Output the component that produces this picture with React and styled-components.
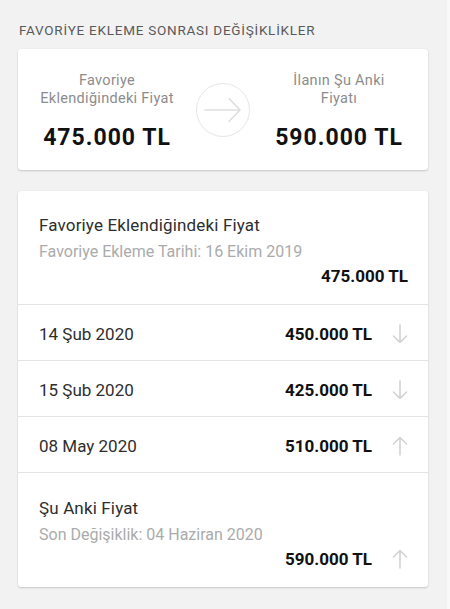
import React from "react";
import styled, { createGlobalStyle } from "styled-components";

const Global = createGlobalStyle`
  html, body { margin: 0; padding: 0; background: #f9f9f9; }
  body { font-family: Roboto, "Noto Sans", Arial, sans-serif; -webkit-font-smoothing: antialiased; }
`;

const Page = styled.div`
  width: 447px;
  min-height: 609px;
  box-sizing: border-box;
  background: #f2f2f2;
  padding: 22px 19px 20px 18px;
`;

const Heading = styled.div`
  font-size: 13.5px;
  line-height: 16px;
  letter-spacing: 0.75px;
  color: #5a5a5a;
  text-transform: uppercase;
  padding-left: 1px;
  margin-bottom: 11px;
  white-space: nowrap;
`;

const Card = styled.div`
  background: #fff;
  border-radius: 3px;
  box-shadow: 0 1px 2px rgba(0, 0, 0, 0.18), 0 0 1px rgba(0, 0, 0, 0.08);
  margin-bottom: ${(p) => p.$mb || 0}px;
  overflow: hidden;
`;

const Summary = styled.div`
  display: grid;
  grid-template-columns: 1fr auto 1fr;
  column-gap: 16px;
  align-items: center;
  padding: 0 16px;
  height: 121px;
  box-sizing: border-box;
`;

const SummaryCol = styled.div`
  text-align: center;
  padding-top: 3px;
`;

const SummaryLabel = styled.div`
  font-size: 14.5px;
  line-height: 18px;
  letter-spacing: 0.3px;
  color: #8c8c8c;
`;

const SummaryPrice = styled.div`
  font-size: 23px;
  line-height: 26px;
  letter-spacing: 1px;
  font-weight: 700;
  color: #111;
  margin-top: 17px;
  white-space: nowrap;
`;

const Circle = styled.div`
  width: 52px;
  height: 52px;
  border-radius: 50%;
  border: 1.5px solid #e6e6e6;
  display: flex;
  align-items: center;
  justify-content: center;
`;

const Section = styled.div`
  padding: ${(p) => (p.$last ? "25px" : "24px")} 20px 18px 21px;
  height: ${(p) => p.$h}px;
  box-sizing: border-box;
  border-top: ${(p) => (p.$first ? "none" : "1px solid #e4e4e4")};
`;

const Title = styled.div`
  font-size: 17px;
  line-height: 20px;
  letter-spacing: 0.15px;
  color: #2e2e2e;
`;

const Sub = styled.div`
  font-size: 16px;
  line-height: 20px;
  color: #ababab;
  margin-top: 7px;
`;

const PriceLine = styled.div`
  display: flex;
  justify-content: flex-end;
  align-items: center;
  margin-top: 4px;
`;

const Row = styled.div`
  display: flex;
  align-items: center;
  height: 56px;
  box-sizing: border-box;
  padding: 2px 20px 0 21px;
  border-top: 1px solid #e4e4e4;
`;

const RowDate = styled.div`
  flex: 1;
  font-size: 17px;
  line-height: 20px;
  color: #2e2e2e;
`;

const Price = styled.div`
  font-size: 17px;
  line-height: 20px;
  font-weight: 700;
  color: #111;
  white-space: nowrap;
`;

const ArrowBox = styled.div`
  width: 16px;
  margin-left: 20px;
  display: flex;
  justify-content: center;
`;

const ArrowRight = () => (
  <svg width="38" height="28" viewBox="0 0 38 28" fill="none">
    <path d="M1 14H36M25 2.5L36 14L25 25.5" stroke="#dedede" strokeWidth="1.6" strokeLinecap="round" strokeLinejoin="round" />
  </svg>
);

const Vert = ({ up }) => (
  <svg width="16" height="20" viewBox="0 0 16 20" fill="none">
    {up ? (
      <path d="M8 19V1.5M1.5 8L8 1.5L14.5 8" stroke="#d3d3d3" strokeWidth="1.6" strokeLinecap="round" strokeLinejoin="round" />
    ) : (
      <path d="M8 1V18.5M1.5 12L8 18.5L14.5 12" stroke="#d3d3d3" strokeWidth="1.6" strokeLinecap="round" strokeLinejoin="round" />
    )}
  </svg>
);

const changes = [
  { date: "14 Şub 2020", price: "450.000 TL", up: false },
  { date: "15 Şub 2020", price: "425.000 TL", up: false },
  { date: "08 May 2020", price: "510.000 TL", up: true },
];

export default function App() {
  return (
    <>
      <Global />
      <Page>
        <Heading>Favorİye Ekleme Sonrası Değİşİklİkler</Heading>
        <Card $mb={21}>
          <Summary>
            <SummaryCol>
              <SummaryLabel>Favoriye<br />Eklendiğindeki Fiyat</SummaryLabel>
              <SummaryPrice>475.000 TL</SummaryPrice>
            </SummaryCol>
            <Circle>
              <ArrowRight />
            </Circle>
            <SummaryCol>
              <SummaryLabel>İlanın Şu Anki<br />Fiyatı</SummaryLabel>
              <SummaryPrice>590.000 TL</SummaryPrice>
            </SummaryCol>
          </Summary>
        </Card>
        <Card>
          <Section $first $h={113}>
            <Title>Favoriye Eklendiğindeki Fiyat</Title>
            <Sub>Favoriye Ekleme Tarihi: 16 Ekim 2019</Sub>
            <PriceLine>
              <Price>475.000 TL</Price>
            </PriceLine>
          </Section>
          {changes.map((c) => (
            <Row key={c.date}>
              <RowDate>{c.date}</RowDate>
              <Price>{c.price}</Price>
              <ArrowBox>
                <Vert up={c.up} />
              </ArrowBox>
            </Row>
          ))}
          <Section $last $h={115}>
            <Title>Şu Anki Fiyat</Title>
            <Sub>Son Değişiklik: 04 Haziran 2020</Sub>
            <PriceLine>
              <Price>590.000 TL</Price>
              <ArrowBox>
                <Vert up />
              </ArrowBox>
            </PriceLine>
          </Section>
        </Card>
      </Page>
    </>
  );
}
